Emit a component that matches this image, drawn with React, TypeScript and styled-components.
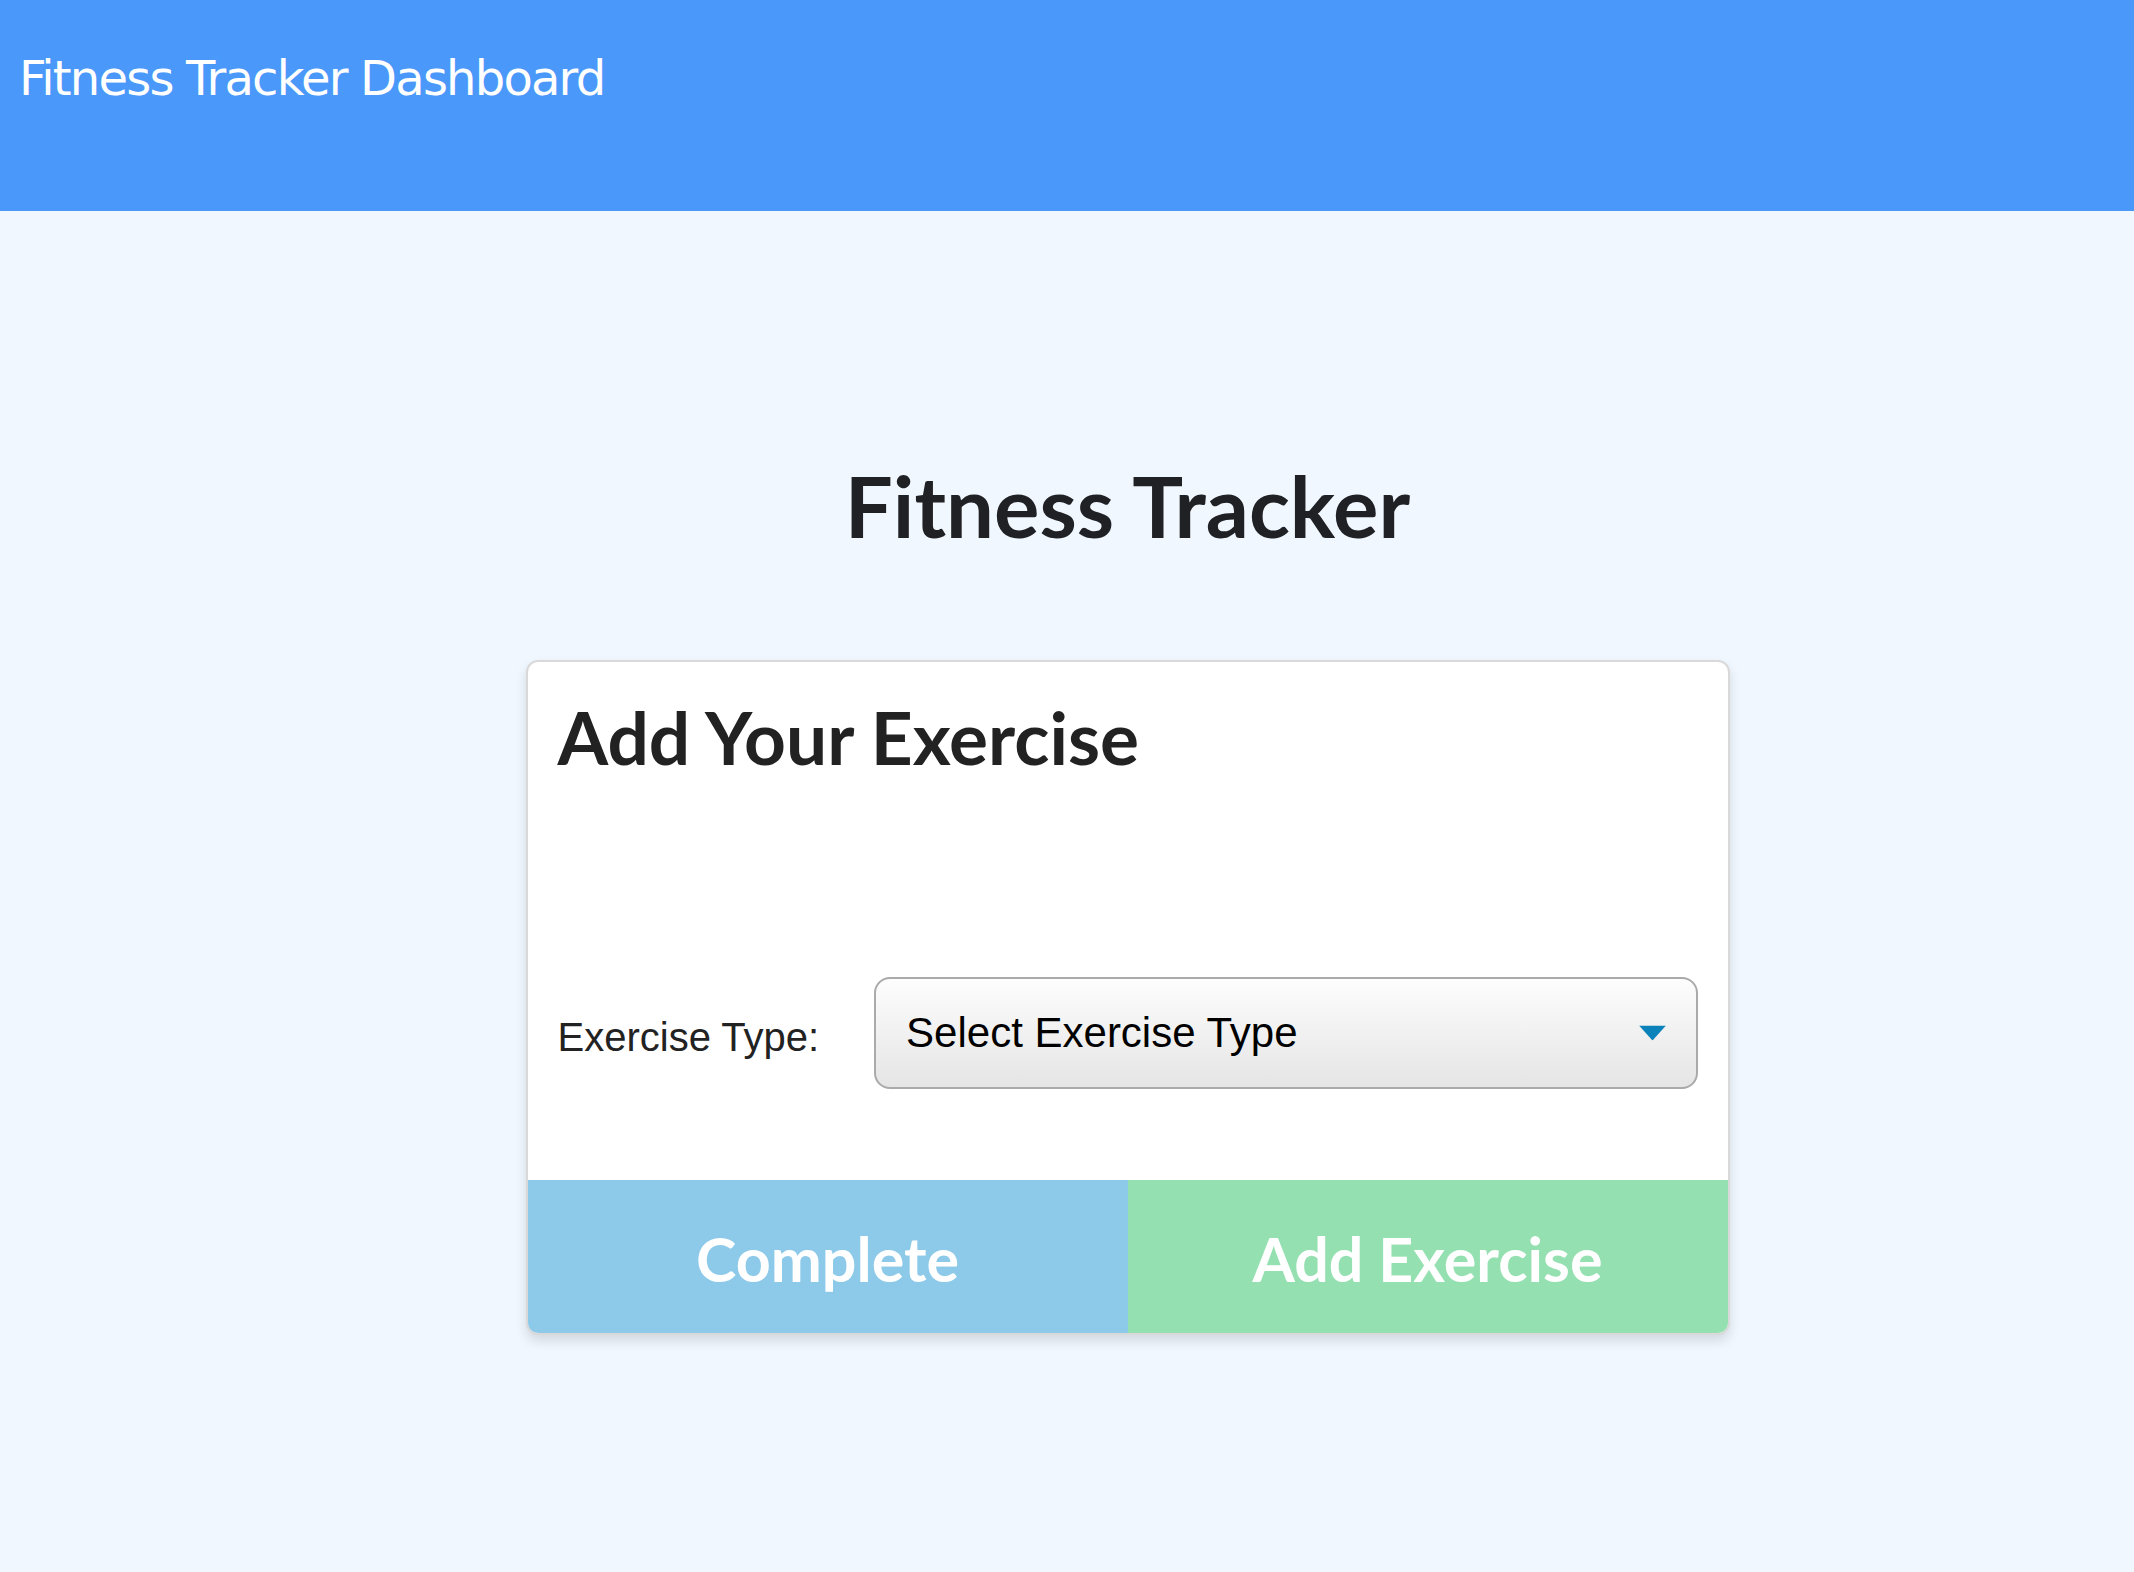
import React from 'react';
import styled, { createGlobalStyle } from 'styled-components';

const GlobalStyle = createGlobalStyle`
  html, body {
    margin: 0;
    padding: 0;
  }
  body {
    background: #f0f7ff;
    font-family: 'Lato', 'Liberation Sans', sans-serif;
  }
`;

const Page = styled.div`
  min-height: 100vh;
  background: #f0f7ff;
`;

const TopBar = styled.header`
  height: 211px;
  box-sizing: border-box;
  background: #4a98f9;
  padding: 50px 0 0 19px;
`;

const BarTitle = styled.div`
  font-family: 'DejaVu Sans', sans-serif;
  font-size: 48px;
  letter-spacing: -1.8px;
  color: #ffffff;
`;

const Main = styled.main`
  display: flex;
  flex-direction: column;
  align-items: center;
  padding: 243px 0 0 121px;
`;

const Heading = styled.h1`
  margin: 0 0 104px;
  font-family: 'Lato', sans-serif;
  font-weight: 700;
  font-size: 85px;
  line-height: 1.2;
  color: #202124;
`;

const Card = styled.section`
  width: 1204px;
  box-sizing: border-box;
  background: #ffffff;
  border: 2px solid #d9d9d9;
  border-radius: 12px;
  overflow: hidden;
  box-shadow: 0 6px 12px rgba(0, 0, 0, 0.12);
`;

const CardBody = styled.div`
  padding: 32px 30px 91px;
`;

const CardTitle = styled.h2`
  margin: 0 0 195px;
  font-family: 'Lato', sans-serif;
  font-weight: 700;
  font-size: 73px;
  line-height: 1.2;
  color: #222222;
`;

const Field = styled.div`
  display: flex;
  align-items: center;
  gap: 55px;
`;

const Label = styled.label`
  padding-top: 10px;
  font-family: 'Liberation Sans', Arial, sans-serif;
  font-size: 40px;
  color: #222222;
  white-space: nowrap;
`;

const SelectWrap = styled.div`
  position: relative;
  flex: 1;
`;

const Select = styled.select`
  width: 100%;
  height: 112px;
  box-sizing: border-box;
  appearance: none;
  -webkit-appearance: none;
  border: 2px solid #aaaaaa;
  border-radius: 16px;
  background: linear-gradient(#fdfdfd, #e5e5e5);
  padding: 0 80px 0 30px;
  font-family: 'Liberation Sans', Arial, sans-serif;
  font-size: 42px;
  color: #000000;
  outline: none;
`;

const Caret = styled.svg`
  position: absolute;
  right: 32px;
  top: 50%;
  width: 27px;
  height: 15px;
  transform: translateY(-50%);
  pointer-events: none;
`;

const Actions = styled.div`
  display: grid;
  grid-template-columns: 1fr 1fr;
`;

const ActionButton = styled.button<{ $tone: 'blue' | 'green' }>`
  height: 153px;
  border: 0;
  margin: 0;
  padding: 5px 0 0;
  background: ${p => (p.$tone === 'blue' ? '#8dc9e8' : '#95e0b1')};
  color: #ffffff;
  font-family: 'Lato', sans-serif;
  font-weight: 700;
  font-size: 61px;
  cursor: pointer;
`;

export default function App() {
  return (
    <Page>
      <GlobalStyle />
      <TopBar>
        <BarTitle>Fitness Tracker Dashboard</BarTitle>
      </TopBar>
      <Main>
        <Heading>Fitness Tracker</Heading>
        <Card>
          <CardBody>
            <CardTitle>Add Your Exercise</CardTitle>
            <Field>
              <Label htmlFor="type">Exercise Type:</Label>
              <SelectWrap>
                <Select id="type" defaultValue="">
                  <option value="" disabled>Select Exercise Type</option>
                  <option value="cardio">Cardio</option>
                  <option value="resistance">Resistance</option>
                </Select>
                <Caret viewBox="0 0 27 15">
                  <path d="M0 0 H27 L13.5 15 Z" fill="#0b82ba" />
                </Caret>
              </SelectWrap>
            </Field>
          </CardBody>
          <Actions>
            <ActionButton $tone="blue">Complete</ActionButton>
            <ActionButton $tone="green">Add Exercise</ActionButton>
          </Actions>
        </Card>
      </Main>
    </Page>
  );
}
